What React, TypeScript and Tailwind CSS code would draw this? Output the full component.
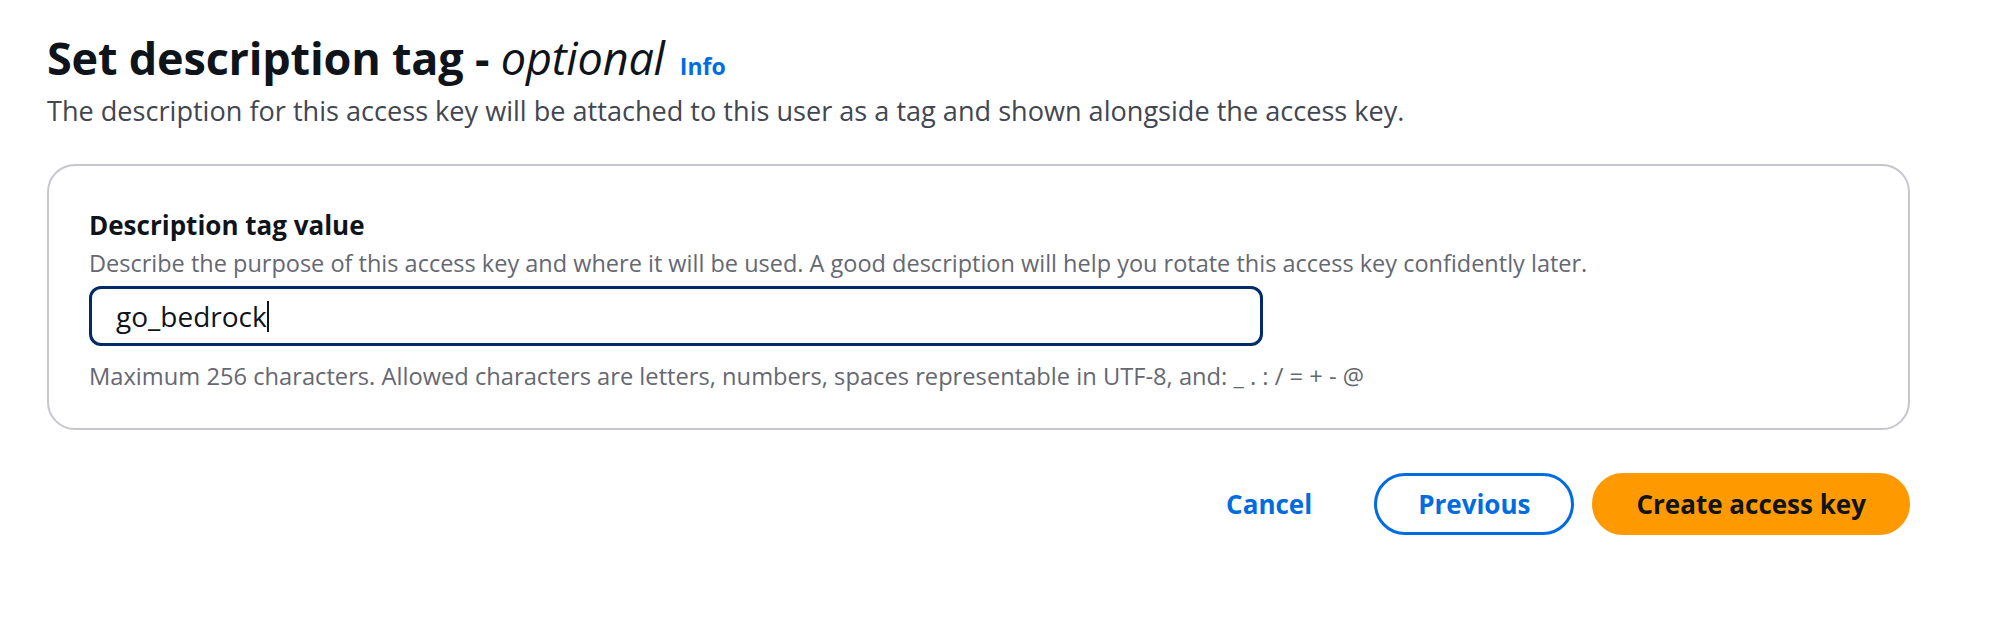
import { useState } from "react";

// 説明タグ入力ステップ
export default function App() {
  const [value] = useState("go_bedrock");

  return (
    <div className="min-h-screen bg-white font-['Open_Sans',sans-serif] text-[#0f141a] pl-[47px] pr-[84px] pt-[29px]">
      {/* ヘッダー */}
      <div className="flex items-baseline gap-[15px]">
        <h1 className="text-[45px] leading-[58px] font-bold tracking-[-0.2px]">
          Set description tag - <i className="font-medium">optional</i>
        </h1>
        <a href="#" className="text-[23px] font-bold text-[#006ce0]">
          Info
        </a>
      </div>
      <p className="mt-[6px] text-[27.1px] leading-[36px] text-[#424650]">
        The description for this access key will be attached to this user as a tag and shown alongside the access key.
      </p>

      {/* フォームコンテナ */}
      <section className="mt-[35px] rounded-[28px] border-2 border-[#c6c6cd] px-[40px] pt-[42px] pb-[37px]">
        <label className="block text-[26px] leading-[34px] font-bold">Description tag value</label>
        <p className="mt-[6px] text-[23.5px] leading-[30px] text-[#656871]">
          Describe the purpose of this access key and where it will be used. A good description will help you rotate this access key confidently later.
        </p>
        <div className="mt-[8px] flex h-[60px] w-[1174px] items-center rounded-[12px] border-[3px] border-[#002b66] pl-[24px]">
          <span className="text-[28px] leading-[34px]">{value}</span>
          <span className="h-[31px] w-[2px] bg-[#0f141a]" />
        </div>
        <p className="mt-[15px] text-[23.7px] leading-[30px] text-[#656871]">
          Maximum 256 characters. Allowed characters are letters, numbers, spaces representable in UTF-8, and: _ . : / = + - @
        </p>
      </section>

      {/* アクション */}
      <div className="mt-[43px] flex justify-end gap-[18px]">
        <button type="button" className="h-[62px] rounded-full border-[3px] border-transparent px-[41px] text-[26px] font-bold text-[#006ce0]">
          Cancel
        </button>
        <button type="button" className="h-[62px] rounded-full border-[3px] border-[#006ce0] bg-white px-[41px] text-[26px] font-bold text-[#006ce0]">
          Previous
        </button>
        <button type="button" className="h-[62px] rounded-full border-[3px] border-[#ff9900] bg-[#ff9900] px-[41px] text-[26px] font-bold text-[#0f141a]">
          Create access key
        </button>
      </div>
    </div>
  );
}
